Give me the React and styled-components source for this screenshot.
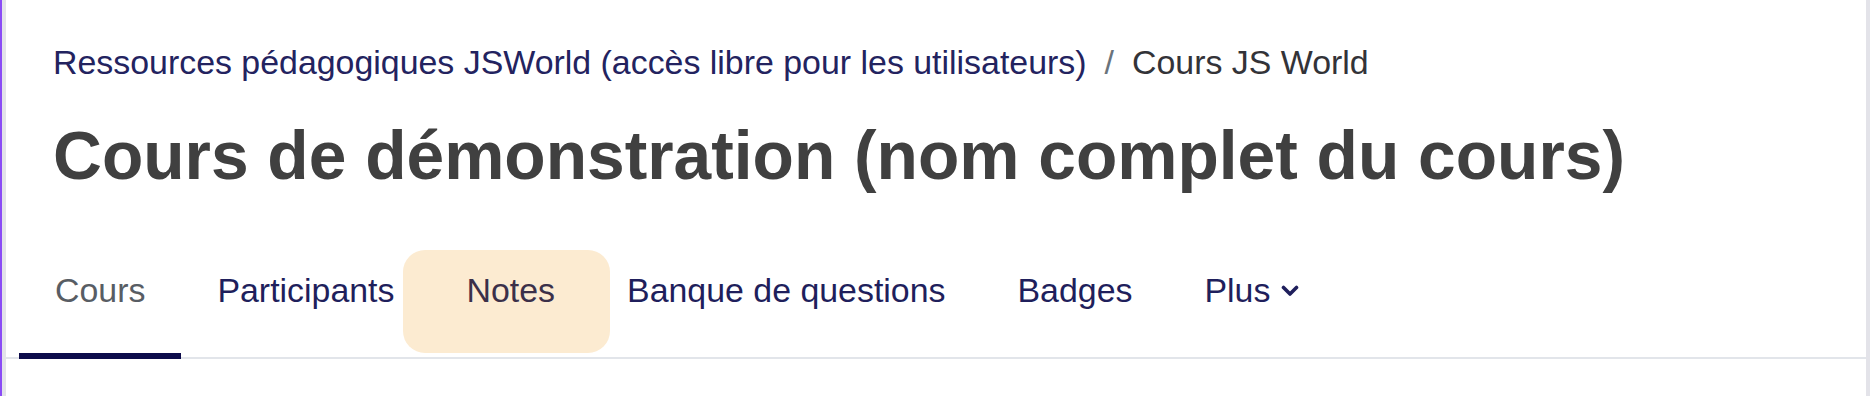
import React from "react";
import styled, { createGlobalStyle } from "styled-components";

const GlobalStyle = createGlobalStyle`
  html, body {
    margin: 0;
    padding: 0;
    background: #ffffff;
  }
  body {
    font-family: "Liberation Sans", Arial, Helvetica, sans-serif;
    -webkit-font-smoothing: antialiased;
  }
`;

const Frame = styled.div`
  min-height: 396px;
  box-sizing: border-box;
  border-left: 2px solid #8a4bf5;
  display: flex;
`;

const Panel = styled.div`
  flex: 1;
  box-sizing: border-box;
  min-height: 396px;
  border-left: 4px solid #e3e3e9;
  border-right: 4px solid #e3e3e9;
  background: #ffffff;
`;

const Header = styled.header`
  padding: 37px 0 0 47px;
`;

const Breadcrumb = styled.nav`
  display: flex;
  align-items: baseline;
  font-size: 33.9px;
  line-height: 50.4px;
  white-space: nowrap;
`;

const CrumbLink = styled.a`
  color: #23235f;
  text-decoration: none;
`;

const CrumbSep = styled.span`
  color: #6a737b;
  margin: 0 18px;
`;

const CrumbCurrent = styled.span`
  color: #333338;
`;

const Title = styled.h1`
  margin: 29px 0 0 0;
  font-size: 67.7px;
  line-height: 80.6px;
  font-weight: 700;
  color: #404040;
  white-space: nowrap;
`;

const Tabs = styled.ul`
  list-style: none;
  display: flex;
  margin: 48px 0 0 0;
  padding: 0 0 0 13px;
  border-bottom: 2px solid #e2e5ea;
`;

const Tab = styled.li`
  position: relative;
  z-index: 0;
`;

const TabLink = styled.a`
  position: relative;
  z-index: 0;
  display: flex;
  align-items: baseline;
  padding: 20px 36px 41.6px;
  font-size: 33.9px;
  line-height: 50.4px;
  text-decoration: none;
  white-space: nowrap;
  color: ${(p) => (p.$active ? "#585d64" : p.$highlight ? "#3b3049" : "#1f1f5c")};

  &::before {
    content: "";
    display: ${(p) => (p.$highlight ? "block" : "none")};
    position: absolute;
    left: -27px;
    right: -19px;
    top: 5px;
    bottom: 4px;
    border-radius: 22px;
    background: #fcebd1;
    z-index: -1;
  }

  &::after {
    content: "";
    display: ${(p) => (p.$active ? "block" : "none")};
    position: absolute;
    left: 0;
    right: 0;
    bottom: -2px;
    height: 6px;
    background: #0d0c4b;
  }
`;

const Caret = styled.svg`
  width: 18px;
  height: 12px;
  margin-left: 11px;
  align-self: center;
  position: relative;
  top: 1px;
`;

const tabs = [
  { label: "Cours", active: true },
  { label: "Participants" },
  { label: "Notes", highlight: true },
  { label: "Banque de questions" },
  { label: "Badges" },
  { label: "Plus", dropdown: true },
];

export default function App() {
  return (
    <>
      <GlobalStyle />
      <Frame>
        <Panel>
          <Header>
            <Breadcrumb>
              <CrumbLink href="#">
                Ressources pédagogiques JSWorld (accès libre pour les utilisateurs)
              </CrumbLink>
              <CrumbSep>/</CrumbSep>
              <CrumbCurrent>Cours JS World</CrumbCurrent>
            </Breadcrumb>
            <Title>Cours de démonstration (nom complet du cours)</Title>
          </Header>
          <Tabs>
            {tabs.map((t) => (
              <Tab key={t.label}>
                <TabLink href="#" $active={t.active} $highlight={t.highlight}>
                  {t.label}
                  {t.dropdown && (
                    <Caret viewBox="0 0 18 12" aria-hidden="true">
                      <path
                        d="M2.5 2.5 L9 9 L15.5 2.5"
                        fill="none"
                        stroke="#1f1f5c"
                        strokeWidth="3.6"
                        strokeLinecap="round"
                        strokeLinejoin="round"
                      />
                    </Caret>
                  )}
                </TabLink>
              </Tab>
            ))}
          </Tabs>
        </Panel>
      </Frame>
    </>
  );
}
